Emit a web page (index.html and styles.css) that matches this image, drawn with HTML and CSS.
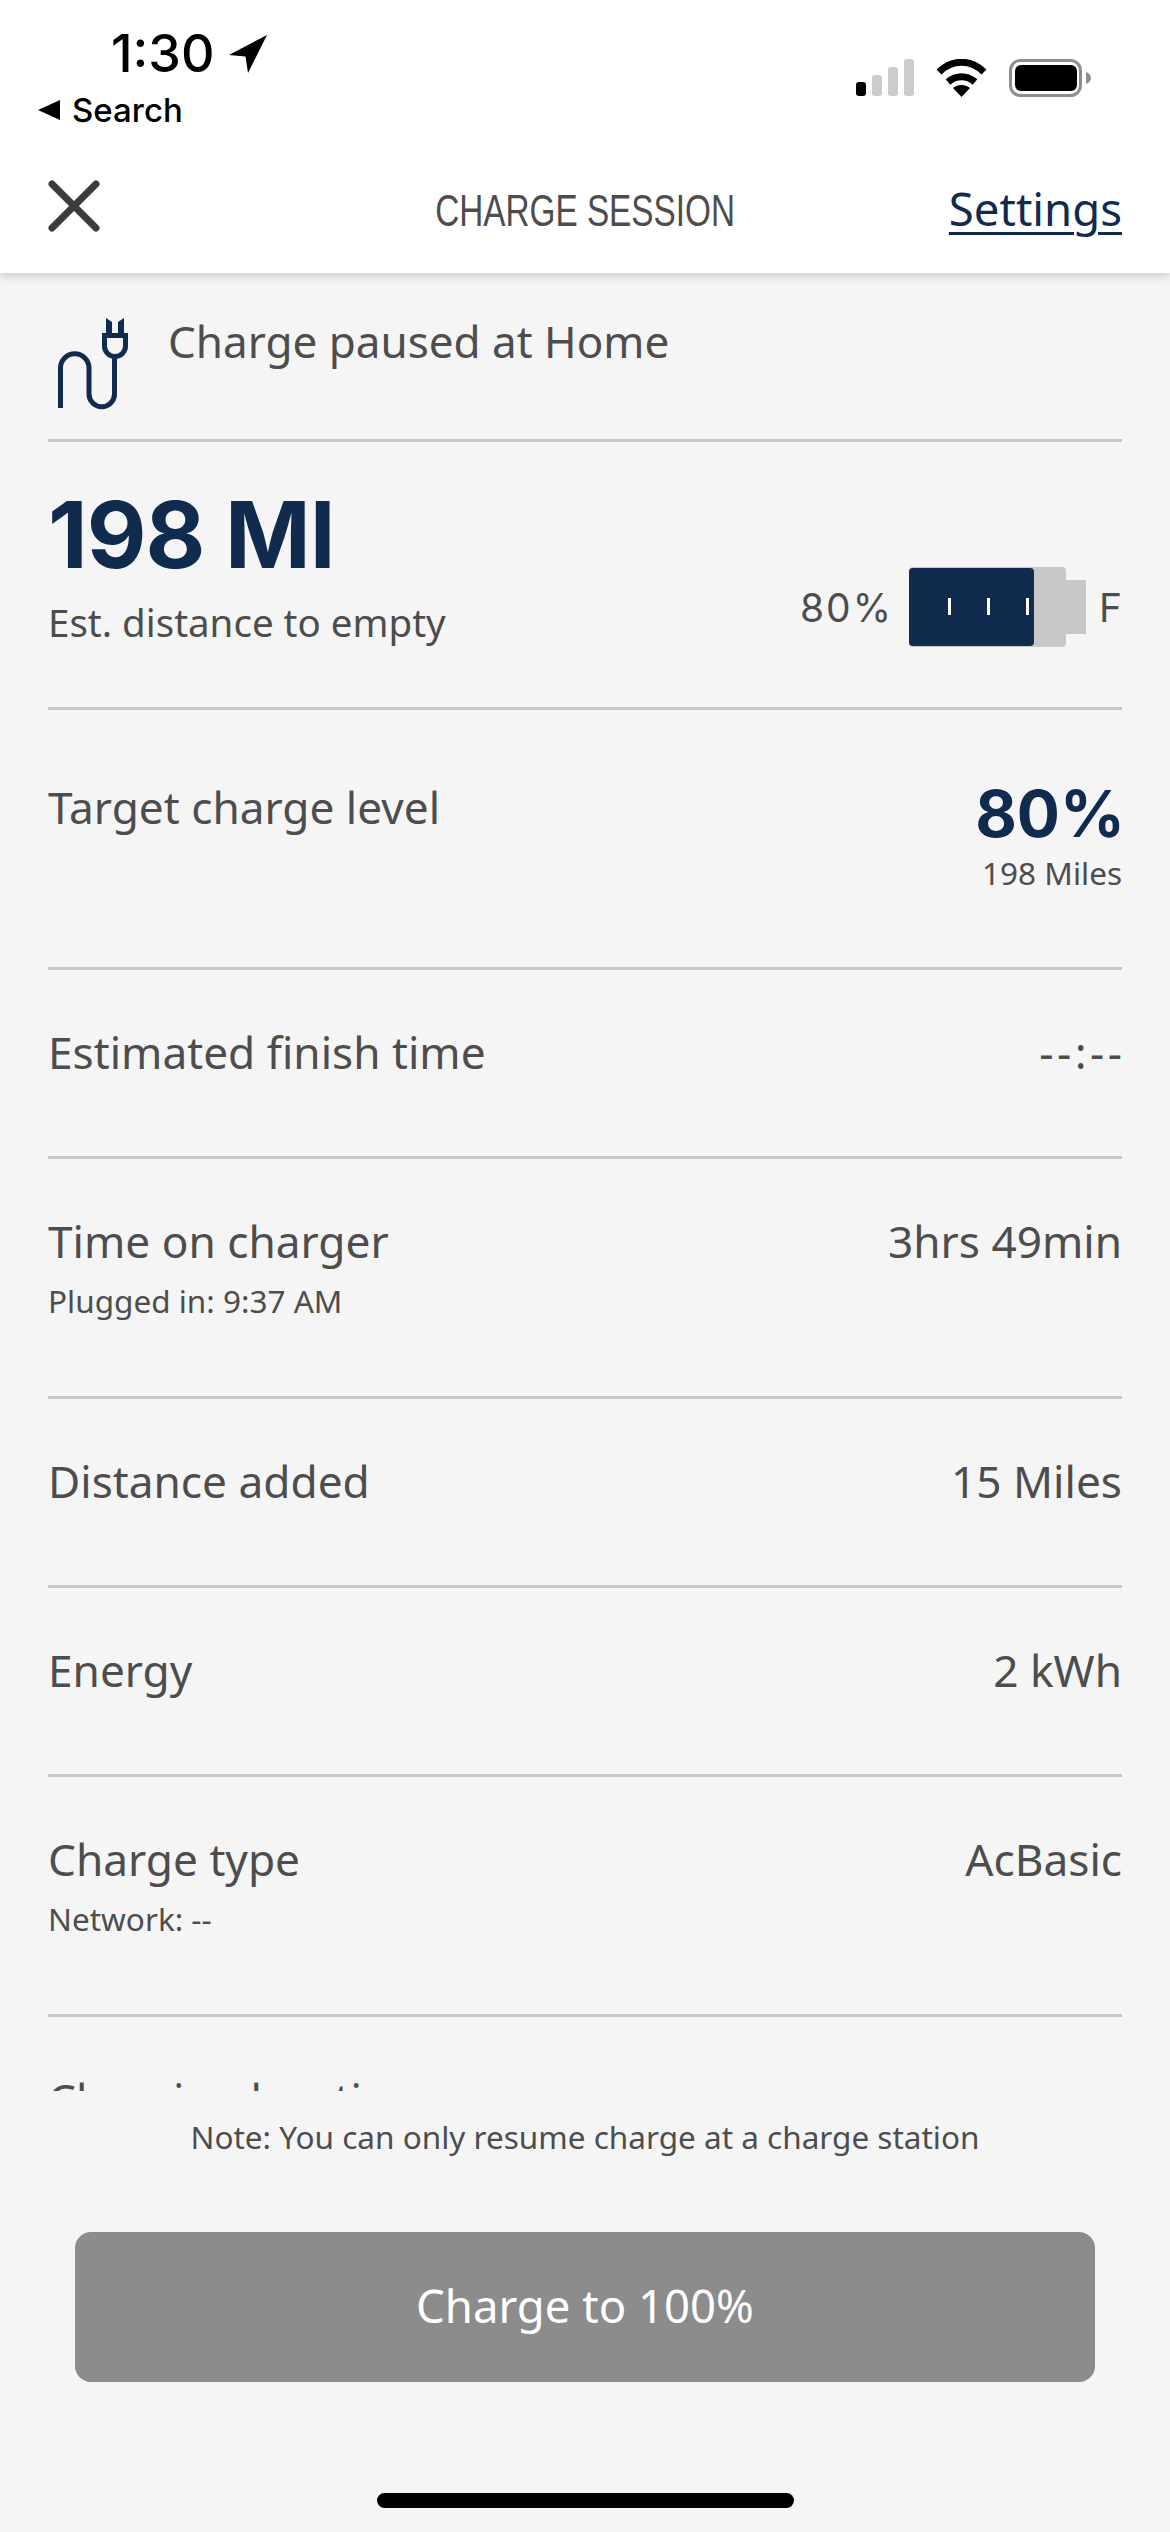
FILE: index.html
```html
<!DOCTYPE html>
<html lang="en">
<head>
  <meta charset="UTF-8">
  <title>Charge Session</title>
  <link rel="stylesheet" href="styles.css">
</head>
<body>
  <div class="app">
    <div class="top">
      <div class="status-bar">
        <div class="status-left">
          <div class="clock">
            <span>1:30</span>
            <svg class="loc-arrow" width="38" height="38" viewBox="0 0 38 38"><path d="M38 0 0 20l16.500 1.500L19 38z" fill="#000"/></svg>
          </div>
          <div class="back-link">
            <svg width="22" height="20" viewBox="0 0 22 20"><path d="M22 0v20L0 10z" fill="#000"/></svg>
            <span>Search</span>
          </div>
        </div>
        <div class="status-right">
          <svg class="signal" width="58" height="38" viewBox="0 0 58 38">
            <rect x="0" y="23" width="10" height="14" rx="3" fill="#000"/>
            <rect x="16" y="16" width="10" height="21" rx="3" fill="#ccc"/>
            <rect x="32" y="8" width="10" height="29" rx="3" fill="#ccc"/>
            <rect x="48" y="0" width="10" height="37" rx="3" fill="#ccc"/>
          </svg>
          <svg class="wifi" width="51" height="38" viewBox="0 0 51 38">
            <path d="M3 13C16 0 35 0 48 13" fill="none" stroke="#000" stroke-width="7"/>
            <path d="M12 23c8-7 19-7 27 0" fill="none" stroke="#000" stroke-width="7"/>
            <path d="M17 29c5-4 12-4 17 0l-8.500 9z" fill="#000"/>
          </svg>
          <svg class="cell" width="82" height="38" viewBox="0 0 82 38">
            <rect x="1.500" y="1.500" width="70" height="35" rx="10" fill="#fff" stroke="#8e8e8e" stroke-width="3"/>
            <rect x="6" y="6" width="62" height="26" rx="6" fill="#000"/>
            <path d="M77 13c3 1 5 3 5 6s-2 5-5 6z" fill="#8e8e8e"/>
          </svg>
        </div>
      </div>
      <div class="nav-bar">
        <svg class="close-icon" width="52" height="52" viewBox="0 0 52 52"><path d="M4 4l44 44M48 4 4 48" fill="none" stroke="#3c3c3c" stroke-width="7" stroke-linecap="round"/></svg>
        <div class="nav-title">CHARGE SESSION</div>
        <a class="nav-link">Settings</a>
      </div>
    </div>

    <div class="list">
      <div class="row row-status">
        <svg class="plug" width="72" height="92" viewBox="0 0 72 92">
          <path d="M2.500 90V50a14.250 14.250 0 0 1 28.500 0v26a12.750 12.750 0 0 0 25.500 0V40" fill="none" stroke="#102b4e" stroke-width="5"/>
          <path d="M46.500 17.500h21V28a10.500 10.500 0 0 1-21 0z" fill="none" stroke="#102b4e" stroke-width="5"/>
          <path d="M48 0l6 4v12h-6zM66 0l-6 4v12h6z" fill="#102b4e"/>
        </svg>
        <span class="status-text">Charge paused at Home</span>
      </div>

      <div class="row row-range">
        <div>
          <div class="range-value">198 MI</div>
          <div class="range-label">Est. distance to empty</div>
        </div>
        <div class="gauge">
          <span>80%</span>
          <svg class="gauge-cell" width="177" height="80" viewBox="0 0 177 80">
            <rect x="0" y="0" width="157" height="80" rx="4" fill="#c8c8c8"/>
            <rect x="157" y="13" width="20" height="54" fill="#c8c8c8"/>
            <rect x="0" y="1" width="125" height="78" rx="4" fill="#102b4e"/>
            <rect x="39" y="31" width="3" height="17" fill="#fff"/>
            <rect x="78" y="31" width="3" height="17" fill="#fff"/>
            <rect x="117" y="31" width="3" height="17" fill="#fff"/>
          </svg>
          <span>F</span>
        </div>
      </div>

      <div class="row row-target">
        <div class="label">Target charge level</div>
        <div class="target">
          <div class="target-value">80%</div>
          <div class="target-sub">198 Miles</div>
        </div>
      </div>

      <div class="row row-plain">
        <div class="label">Estimated finish time</div>
        <div class="value value-dash">--:--</div>
      </div>

      <div class="row row-tall">
        <div>
          <div class="label">Time on charger</div>
          <div class="sub">Plugged in: 9:37 AM</div>
        </div>
        <div class="value">3hrs 49min</div>
      </div>

      <div class="row row-plain">
        <div class="label">Distance added</div>
        <div class="value">15 Miles</div>
      </div>

      <div class="row row-plain">
        <div class="label">Energy</div>
        <div class="value">2 kWh</div>
      </div>

      <div class="row row-tall">
        <div>
          <div class="label">Charge type</div>
          <div class="sub">Network: --</div>
        </div>
        <div class="value">AcBasic</div>
      </div>

      <div class="row row-last">
        <div class="label">Charging location</div>
      </div>
    </div>

    <div class="footer">
      <div class="note">Note: You can only resume charge at a charge station</div>
      <button class="charge-btn">Charge to 100%</button>
      <div class="home-bar"></div>
    </div>
  </div>
</body>
</html>
```

FILE: styles.css
```css
* {
  box-sizing: border-box;
}
html, body {
  margin: 0;
  padding: 0;
}
body {
  font-family: "Noto Sans", "Open Sans", sans-serif;
  background-color: #f5f5f5;
  color: #4d4d4d;
}
.app {
  width: 1170px;
  height: 2532px;
  display: flex;
  flex-direction: column;
  overflow: hidden;
}

/* top */
.top {
  height: 273px;
  flex: none;
  background-color: #fff;
  box-shadow: 0 3px 10px rgba(0,0,0,0.18);
  position: relative;
  z-index: 1;
}
.status-bar {
  height: 160px;
  display: flex;
  justify-content: space-between;
  padding: 26px 79px 0 38px;
}
.clock {
  display: flex;
  align-items: center;
  gap: 14px;
  padding-left: 73px;
  font-family: "Inter", sans-serif;
  font-size: 52px;
  font-weight: 500;
  line-height: 56px;
  color: #000;
}
.back-link {
  display: flex;
  align-items: center;
  gap: 12px;
  margin-top: 8px;
  font-family: "Inter", sans-serif;
  font-size: 33px;
  font-weight: 500;
  line-height: 40px;
  color: #000;
}
.status-right {
  display: flex;
  gap: 22px;
  padding-top: 33px;
  align-items: flex-start;
}
.nav-bar {
  display: grid;
  grid-template-columns: 1fr auto 1fr;
  align-items: center;
  padding: 0 48px;
  height: 90px;
  margin-top: 1px;
}
.nav-title {
  font-family: "Liberation Sans", sans-serif;
  font-size: 44px;
  color: #4d4d4d;
  padding-top: 10px;
  transform: scaleX(0.757);
}
.nav-link {
  justify-self: end;
  font-size: 45.5px;
  padding-top: 4px;
  color: #102b4e;
  text-decoration: underline;
  text-decoration-thickness: 3px;
  text-underline-offset: 6px;
}

/* list */
.list {
  height: 1818px;
  flex: none;
  overflow: hidden;
  padding: 0 48px;
}
.row {
  display: flex;
  justify-content: space-between;
  align-items: flex-start;
  border-bottom: 3px solid #c8c8c8;
}
.row-status {
  height: 169px;
  justify-content: flex-start;
  gap: 38px;
  padding-top: 38px;
}
.plug {
  margin: 7px 0 0 10px;
}
.status-text {
  font-size: 44px;
  line-height: 60px;
}
.row-range {
  height: 268px;
  align-items: flex-end;
  padding-bottom: 60px;
}
.range-value {
  font-family: "Inter", sans-serif;
  font-size: 92px;
  font-weight: 700;
  letter-spacing: -1px;
  line-height: 100px;
  color: #102b4e;
}
.range-label {
  font-size: 38.5px;
  line-height: 50px;
  margin-top: 12px;
}
.gauge {
  display: flex;
  align-items: center;
  font-family: "Inter", sans-serif;
  font-size: 39px;
  letter-spacing: 2px;
  margin-right: -2px;
}
.gauge-cell {
  margin: 0 13px 0 16px;
}
.row-target {
  height: 260px;
  padding-top: 65px;
}
.row-plain {
  height: 189px;
  padding-top: 50px;
}
.row-tall {
  height: 240px;
  padding-top: 50px;
}
.row-last {
  padding-top: 62px;
  height: 189px;
}
.row-last .label {
  line-height: 40px;
}
.label, .value {
  font-size: 44.2px;
  line-height: 64px;
}
.value-dash {
  letter-spacing: 3.5px;
  margin-right: -3.5px;
}
.sub {
  font-size: 31.5px;
  line-height: 44px;
  margin-top: 6px;
}
.target {
  text-align: right;
}
.target-value {
  font-family: "Inter", sans-serif;
  font-size: 64px;
  font-weight: 700;
  line-height: 60px;
  margin: 9px -3px 0 0;
  color: #102b4e;
}
.target-sub {
  font-size: 31.5px;
  line-height: 44px;
  margin-top: 7px;
}

/* footer */
.footer {
  flex: 1;
  display: flex;
  flex-direction: column;
  align-items: center;
}
.note {
  font-size: 31.5px;
  line-height: 38px;
  margin-top: 27px;
}
.charge-btn {
  width: 1020px;
  height: 150px;
  margin-top: 76px;
  padding-bottom: 5px;
  border: none;
  border-radius: 16px;
  background-color: #8c8c8c;
  color: #fff;
  font-family: inherit;
  font-size: 45.5px;
}
.home-bar {
  width: 417px;
  height: 15px;
  margin-top: 111px;
  border-radius: 8px;
  background-color: #000;
}
```
